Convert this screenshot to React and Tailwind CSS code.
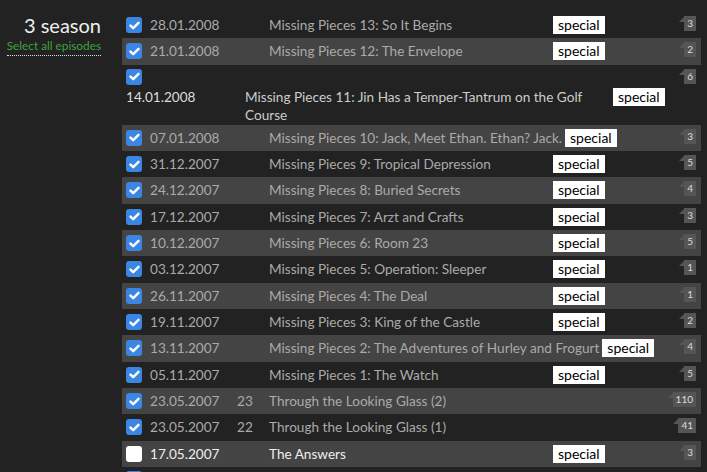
import React from "react";

const episodes = [
  { date: "28.01.2008", num: "", title: "Missing Pieces 13: So It Begins", special: true, count: "3", checked: true },
  { date: "21.01.2008", num: "", title: "Missing Pieces 12: The Envelope", special: true, count: "2", checked: true },
  { date: "14.01.2008", num: "", title: "Missing Pieces 11: Jin Has a Temper-Tantrum on the Golf Course", special: true, count: "6", checked: true, broken: true },
  { date: "07.01.2008", num: "", title: "Missing Pieces 10: Jack, Meet Ethan. Ethan? Jack.", special: true, count: "3", checked: true },
  { date: "31.12.2007", num: "", title: "Missing Pieces 9: Tropical Depression", special: true, count: "5", checked: true },
  { date: "24.12.2007", num: "", title: "Missing Pieces 8: Buried Secrets", special: true, count: "4", checked: true },
  { date: "17.12.2007", num: "", title: "Missing Pieces 7: Arzt and Crafts", special: true, count: "3", checked: true },
  { date: "10.12.2007", num: "", title: "Missing Pieces 6: Room 23", special: true, count: "5", checked: true },
  { date: "03.12.2007", num: "", title: "Missing Pieces 5: Operation: Sleeper", special: true, count: "1", checked: true },
  { date: "26.11.2007", num: "", title: "Missing Pieces 4: The Deal", special: true, count: "1", checked: true },
  { date: "19.11.2007", num: "", title: "Missing Pieces 3: King of the Castle", special: true, count: "2", checked: true },
  { date: "13.11.2007", num: "", title: "Missing Pieces 2: The Adventures of Hurley and Frogurt", special: true, count: "4", checked: true },
  { date: "05.11.2007", num: "", title: "Missing Pieces 1: The Watch", special: true, count: "5", checked: true },
  { date: "23.05.2007", num: "23", title: "Through the Looking Glass (2)", special: false, count: "110", checked: true },
  { date: "23.05.2007", num: "22", title: "Through the Looking Glass (1)", special: false, count: "41", checked: true },
  { date: "17.05.2007", num: "", title: "The Answers", special: true, count: "3", checked: false },
];

function Check({ checked }) {
  if (!checked) {
    return <span className="block w-4 h-4 shrink-0 rounded-[3px] bg-white" />;
  }
  return (
    <span className="flex items-center justify-center w-4 h-4 shrink-0 rounded-[3px] bg-[#3a86e2]">
      <svg width="11" height="9" viewBox="0 0 11 9">
        <path d="M1.5 4.6 L4.2 7.2 L9.5 1.8" fill="none" stroke="white" strokeWidth="2.4" strokeLinecap="round" strokeLinejoin="round" />
      </svg>
    </span>
  );
}

function Count({ value }) {
  return (
    <span className="absolute right-[5px] top-1 flex">
      <span className="w-0 h-0 border-t-[6px] border-t-transparent border-r-[6px] border-r-[#555]" />
      <span className="h-[15px] px-[3px] bg-[#555] text-[10px] leading-[15px] text-[#ddd] -ml-px">{value}</span>
    </span>
  );
}

function Special() {
  return (
    <span className="shrink-0 bg-white text-black px-[5px] h-[18px] leading-[18px] text-[14px]">special</span>
  );
}

function Row({ ep, shaded }) {
  const bg = shaded ? "bg-[#444]" : "";
  const text = ep.checked ? "text-[#aaa]" : "text-[#eee]";
  if (ep.broken) {
    return (
      <div className={`relative pt-1 pb-[1px] ${bg}`}>
        <div className="pl-1"><Check checked={ep.checked} /></div>
        <div className="flex items-start mt-[3px] text-[13.6px] leading-[18px]">
          <span className="w-[123px] shrink-0 pl-1 text-[#ddd]">{ep.date}</span>
          <span className="w-[368px] shrink-0 text-[#ccc]">{ep.title}</span>
          <Special />
        </div>
        <Count value={ep.count} />
      </div>
    );
  }
  return (
    <div className={`relative flex items-center h-[26.33px] pl-1 text-[13.6px] ${bg} ${text}`}>
      <Check checked={ep.checked} />
      <span className="w-[87px] shrink-0 ml-2">{ep.date}</span>
      <span className="w-[32px] shrink-0">{ep.num}</span>
      <span className="min-w-[284px] whitespace-nowrap pr-[3px]">{ep.title}</span>
      {ep.special && <Special />}
      <Count value={ep.count} />
    </div>
  );
}

export default function App() {
  return (
    <div className="h-screen bg-[#222] flex pt-3 overflow-hidden" style={{ fontFamily: "Lato, 'Liberation Sans', sans-serif" }}>
      {/* Season header */}
      <div className="w-[101px] shrink-0 flex flex-col items-end">
        <div className="text-[20px] leading-[26px] text-[#eee]">3 season</div>
        <a className="mt-[1px] text-[11.8px] leading-[14px] text-[#3ea33e] border-b border-dotted border-[#ddd] pb-[2px]">Select all episodes</a>
      </div>

      {/* Episode list */}
      <div className="ml-[21px] w-[579px] shrink-0">
        {episodes.map((ep, i) => (
          <Row key={i} ep={ep} shaded={i % 2 === 1} />
        ))}
        <div className="h-[26px] pl-1 pt-1">
          <Check checked />
        </div>
      </div>
    </div>
  );
}
